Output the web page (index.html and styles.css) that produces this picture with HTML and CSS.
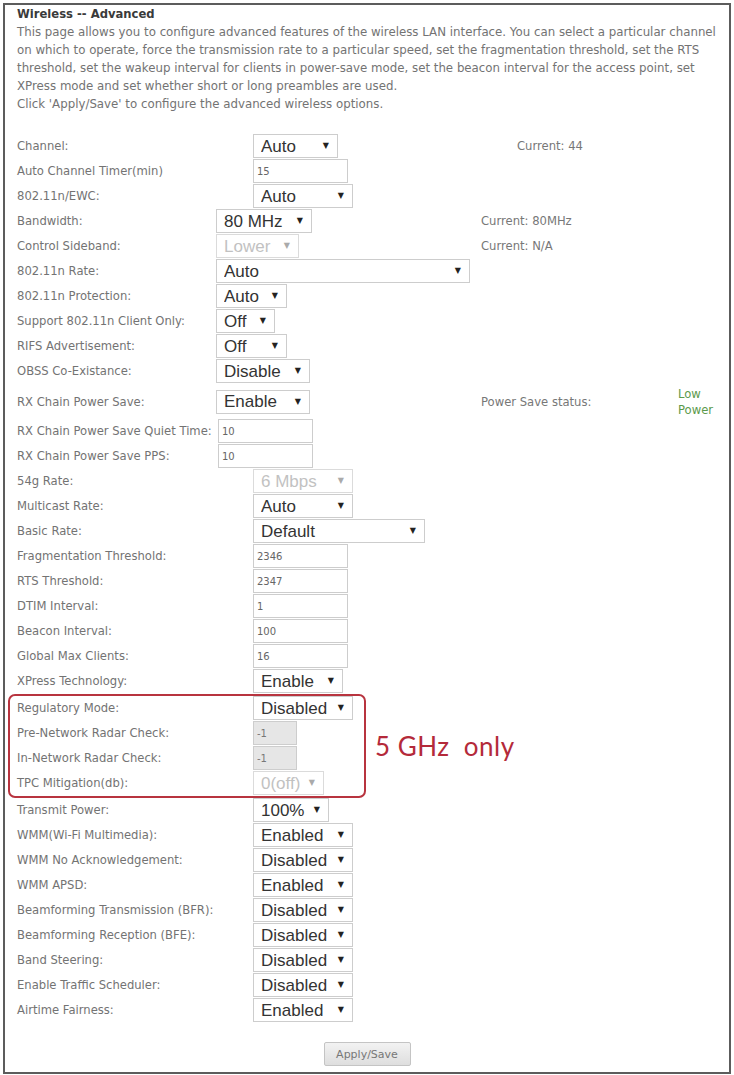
FILE: index.html
```html
<!DOCTYPE html>
<html lang="en">
<head>
    <meta charset="UTF-8">
    <meta name="viewport" content="width=device-width, initial-scale=1.0">
    <title>Wireless -- Advanced</title>
    <link rel="stylesheet" href="styles.css">
</head>
<body>
    <div class="page">
        <h1 class="title">Wireless -- Advanced</h1>
        <p class="intro">
            This page allows you to configure advanced features of the wireless LAN interface. You can select a particular channel<br>
            on which to operate, force the transmission rate to a particular speed, set the fragmentation threshold, set the RTS<br>
            threshold, set the wakeup interval for clients in power-save mode, set the beacon interval for the access point, set<br>
            XPress mode and set whether short or long preambles are used.<br>
            Click 'Apply/Save' to configure the advanced wireless options.
        </p>

        <form id="form">
            <!-- channel block -->
            <div class="section sec-a">
                <div class="row">
                    <span class="label">Channel:</span>
                    <span class="pick w-chan"><select><option>Auto</option></select></span>
                    <span class="info">Current: 44</span>
                </div>
                <div class="row">
                    <span class="label">Auto Channel Timer(min)</span>
                    <span><input class="field" type="text" value="15"></span>
                </div>
                <div class="row">
                    <span class="label">802.11n/EWC:</span>
                    <span class="pick w-std"><select><option>Auto</option></select></span>
                </div>
            </div>

            <!-- 802.11n block -->
            <div class="section sec-b">
                <div class="row">
                    <span class="label">Bandwidth:</span>
                    <span class="pick w-mid"><select><option>80 MHz</option></select></span>
                    <span class="info">Current: 80MHz</span>
                </div>
                <div class="row">
                    <span class="label">Control Sideband:</span>
                    <span class="pick w-side off"><select disabled><option>Lower</option></select></span>
                    <span class="info">Current: N/A</span>
                </div>
                <div class="row">
                    <span class="label">802.11n Rate:</span>
                    <span class="pick w-rate"><select><option>Auto</option></select></span>
                </div>
                <div class="row">
                    <span class="label">802.11n Protection:</span>
                    <span class="pick w-small"><select><option>Auto</option></select></span>
                </div>
                <div class="row">
                    <span class="label">Support 802.11n Client Only:</span>
                    <span class="pick w-tiny"><select><option>Off</option></select></span>
                </div>
                <div class="row">
                    <span class="label">RIFS Advertisement:</span>
                    <span class="pick w-small"><select><option>Off</option></select></span>
                </div>
                <div class="row">
                    <span class="label">OBSS Co-Existance:</span>
                    <span class="pick w-obss"><select><option>Disable</option></select></span>
                </div>
                <div class="row tall">
                    <span class="label">RX Chain Power Save:</span>
                    <span class="pick w-obss"><select><option>Enable</option></select></span>
                    <span class="info">Power Save status:</span>
                    <span class="status">Low Power</span>
                </div>
            </div>

            <!-- rx chain block -->
            <div class="section sec-c">
                <div class="row">
                    <span class="label">RX Chain Power Save Quiet Time:</span>
                    <span><input class="field" type="text" value="10"></span>
                </div>
                <div class="row">
                    <span class="label">RX Chain Power Save PPS:</span>
                    <span><input class="field" type="text" value="10"></span>
                </div>
            </div>

            <!-- rates and intervals -->
            <div class="section sec-d">
                <div class="row">
                    <span class="label">54g Rate:</span>
                    <span class="pick w-std off"><select disabled><option>6 Mbps</option></select></span>
                </div>
                <div class="row">
                    <span class="label">Multicast Rate:</span>
                    <span class="pick w-std"><select><option>Auto</option></select></span>
                </div>
                <div class="row">
                    <span class="label">Basic Rate:</span>
                    <span class="pick w-basic"><select><option>Default</option></select></span>
                </div>
                <div class="row">
                    <span class="label">Fragmentation Threshold:</span>
                    <span><input class="field" type="text" value="2346"></span>
                </div>
                <div class="row">
                    <span class="label">RTS Threshold:</span>
                    <span><input class="field" type="text" value="2347"></span>
                </div>
                <div class="row">
                    <span class="label">DTIM Interval:</span>
                    <span><input class="field" type="text" value="1"></span>
                </div>
                <div class="row">
                    <span class="label">Beacon Interval:</span>
                    <span><input class="field" type="text" value="100"></span>
                </div>
                <div class="row">
                    <span class="label">Global Max Clients:</span>
                    <span><input class="field" type="text" value="16"></span>
                </div>
                <div class="row">
                    <span class="label">XPress Technology:</span>
                    <span class="pick w-xpress"><select><option>Enable</option></select></span>
                </div>
            </div>

            <!-- 5 GHz only settings -->
            <div class="radar">
                <div class="radar-box">
                    <div class="row">
                        <span class="label">Regulatory Mode:</span>
                        <span class="pick w-std"><select><option>Disabled</option></select></span>
                    </div>
                    <div class="row">
                        <span class="label">Pre-Network Radar Check:</span>
                        <span><input class="field short" type="text" value="-1" disabled></span>
                    </div>
                    <div class="row">
                        <span class="label">In-Network Radar Check:</span>
                        <span><input class="field short" type="text" value="-1" disabled></span>
                    </div>
                    <div class="row">
                        <span class="label">TPC Mitigation(db):</span>
                        <span class="pick w-small off"><select disabled><option>0(off)</option></select></span>
                    </div>
                </div>
                <span class="note">5 GHz  only</span>
            </div>

            <div class="section sec-d">
                <div class="row">
                    <span class="label">Transmit Power:</span>
                    <span class="pick w-pct"><select><option>100%</option></select></span>
                </div>
                <div class="row">
                    <span class="label">WMM(Wi-Fi Multimedia):</span>
                    <span class="pick w-std"><select><option>Enabled</option></select></span>
                </div>
                <div class="row">
                    <span class="label">WMM No Acknowledgement:</span>
                    <span class="pick w-std"><select><option>Disabled</option></select></span>
                </div>
                <div class="row">
                    <span class="label">WMM APSD:</span>
                    <span class="pick w-std"><select><option>Enabled</option></select></span>
                </div>
                <div class="row">
                    <span class="label">Beamforming Transmission (BFR):</span>
                    <span class="pick w-std"><select><option>Disabled</option></select></span>
                </div>
                <div class="row">
                    <span class="label">Beamforming Reception (BFE):</span>
                    <span class="pick w-std"><select><option>Disabled</option></select></span>
                </div>
                <div class="row">
                    <span class="label">Band Steering:</span>
                    <span class="pick w-std"><select><option>Disabled</option></select></span>
                </div>
                <div class="row">
                    <span class="label">Enable Traffic Scheduler:</span>
                    <span class="pick w-std"><select><option>Disabled</option></select></span>
                </div>
                <div class="row">
                    <span class="label">Airtime Fairness:</span>
                    <span class="pick w-std"><select><option>Enabled</option></select></span>
                </div>
            </div>

            <div class="actions">
                <button type="button">Apply/Save</button>
            </div>
        </form>
    </div>
</body>
</html>
```

FILE: styles.css
```css
body {
    margin: 0;
    background-color: #fff;
    font-family: "DejaVu Sans", sans-serif;
    font-size: 11.6px;
    color: #737373;
}
.page {
    margin: 3px;
    padding: 0 12px 6px;
    border: 2px solid #5c5c5c;
}
.title {
    margin: 0;
    font-size: 11.6px;
    line-height: 18px;
    font-weight: bold;
    color: #3a3a3a;
}
.intro {
    margin: 0 0 21px;
    font-size: 11.8px;
    line-height: 18px;
    white-space: nowrap;
}
.row {
    display: grid;
    height: 25px;
    line-height: 24px;
}
.row.tall {
    height: 35px;
    align-items: center;
}
.sec-a .row {
    grid-template-columns: 236px 264px 1fr;
}
.sec-b .row {
    grid-template-columns: 199px 265px 197px 1fr;
}
.sec-c .row {
    grid-template-columns: 201px 1fr;
}
.sec-d .row, .radar-box .row {
    grid-template-columns: 236px 1fr;
}
.label {
    white-space: nowrap;
}
.info {
    color: #777;
}
.status {
    width: 40px;
    line-height: 16px;
    color: #5c9a4c;
}

/* drop-downs */
.pick {
    position: relative;
    display: block;
    height: 24px;
}
.pick select {
    width: 100%;
    height: 24px;
    padding: 0 0 0 7px;
    border: 1px solid #cdcdcd;
    border-radius: 0;
    background: #fff;
    font-family: "Liberation Sans", Arial, sans-serif;
    font-size: 17px;
    color: #333;
    appearance: none;
    -webkit-appearance: none;
}
.pick::after {
    content: "\25BC";
    position: absolute;
    right: 9px;
    top: 0;
    font-size: 8px;
    line-height: 24px;
    color: #222;
    pointer-events: none;
}
.pick.off select {
    color: #a8a8a8;
}
.pick.off::after {
    color: #aaa;
}
.w-tiny { width: 59px; }
.w-small { width: 71px; }
.w-pct { width: 76px; }
.w-side { width: 83px; }
.w-chan { width: 85px; }
.w-xpress { width: 90px; }
.w-obss { width: 94px; }
.w-mid { width: 96px; }
.w-std { width: 100px; }
.w-basic { width: 172px; }
.w-rate { width: 254px; }

/* text boxes */
.field {
    box-sizing: border-box;
    width: 95px;
    height: 24px;
    padding: 0 3px;
    border: 1px solid #cdcdcd;
    font-family: "DejaVu Sans", sans-serif;
    font-size: 10px;
    color: #666;
    vertical-align: top;
}
.field.short {
    width: 44px;
    background-color: #e6e6e6;
    color: #777;
}

/* 5 GHz group */
.radar {
    display: flex;
    align-items: center;
    margin-left: -9px;
}
.radar-box {
    width: 347px;
    padding-left: 7px;
    border: 2px solid #b8343f;
    border-radius: 7px;
}
.note {
    margin-left: 9px;
    font-family: Lato, sans-serif;
    font-size: 26px;
    letter-spacing: 0.5px;
    color: #b42a3a;
    white-space: pre;
}

.actions {
    display: flex;
    justify-content: center;
    padding: 19px 0 0;
}
button {
    width: 87px;
    height: 24px;
    border: 1px solid #c4c4c4;
    border-radius: 2px;
    background: linear-gradient(#f2f2f2, #dedede);
    font-family: "DejaVu Sans", sans-serif;
    font-size: 11px;
    color: #777;
}
```
